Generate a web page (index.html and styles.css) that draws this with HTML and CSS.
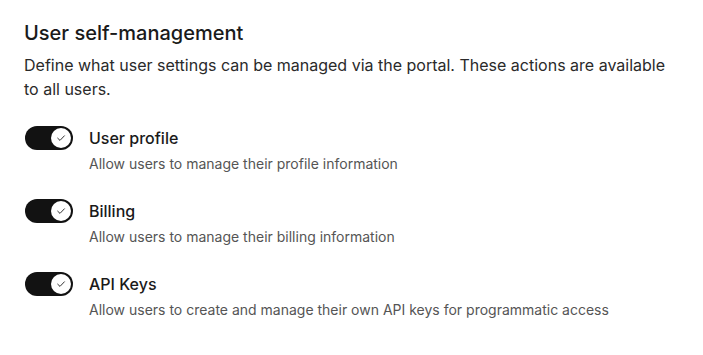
FILE: index.html
```html
<!DOCTYPE html>
<html>
<head>
<meta charset="utf-8">
<link rel="stylesheet" href="styles.css">
</head>
<body>
<section class="panel">
  <h2 class="title">User self-management</h2>
  <p class="intro">Define what user settings can be managed via the portal. These actions are available to all users.</p>
  <ul class="options">
    <li class="option">
      <span class="toggle"><span class="knob"><svg viewBox="0 0 12 12" width="12" height="12"><path d="M2.7 6.2 L5 8.4 L9.4 3.8" fill="none" stroke="#333" stroke-width="1" stroke-linecap="round" stroke-linejoin="round"/></svg></span></span>
      <div class="text">
        <div class="label">User profile</div>
        <div class="desc">Allow users to manage their profile information</div>
      </div>
    </li>
    <li class="option">
      <span class="toggle"><span class="knob"><svg viewBox="0 0 12 12" width="12" height="12"><path d="M2.7 6.2 L5 8.4 L9.4 3.8" fill="none" stroke="#333" stroke-width="1" stroke-linecap="round" stroke-linejoin="round"/></svg></span></span>
      <div class="text">
        <div class="label">Billing</div>
        <div class="desc">Allow users to manage their billing information</div>
      </div>
    </li>
    <li class="option">
      <span class="toggle"><span class="knob"><svg viewBox="0 0 12 12" width="12" height="12"><path d="M2.7 6.2 L5 8.4 L9.4 3.8" fill="none" stroke="#333" stroke-width="1" stroke-linecap="round" stroke-linejoin="round"/></svg></span></span>
      <div class="text">
        <div class="label">API Keys</div>
        <div class="desc">Allow users to create and manage their own API keys for programmatic access</div>
      </div>
    </li>
  </ul>
</section>
</body>
</html>
```
FILE: styles.css
```css
* { box-sizing: border-box; }
html, body { margin: 0; padding: 0; background: #fff; }
body { font-family: Inter, "Noto Sans", sans-serif; color: #171717; }
.panel { padding: 18px 24px 0 24px; width: 703px; }
.title { margin: 0; font-size: 20px; line-height: 30px; font-weight: 500; color: #1a1a1a; }
.intro { margin: 5px 0 0 0; max-width: 650px; font-size: 16px; line-height: 24px; color: #2a2a2a; }
.options { list-style: none; margin: 25px 0 0 0; padding: 0; display: flex; flex-direction: column; gap: 25px; }
.option { display: flex; align-items: flex-start; gap: 16px; }
.toggle { flex: none; width: 48px; height: 24px; border-radius: 12px; background: #121212; display: flex; align-items: center; justify-content: flex-end; padding-right: 2px; margin-left: 1px; }
.knob { width: 20px; height: 20px; border-radius: 50%; background: #fff; display: flex; align-items: center; justify-content: center; }
.text { display: flex; flex-direction: column; gap: 4px; }
.label { font-size: 16px; line-height: 24px; font-weight: 500; color: #1a1a1a; }
.desc { font-size: 14px; line-height: 20px; color: #555; }
```
